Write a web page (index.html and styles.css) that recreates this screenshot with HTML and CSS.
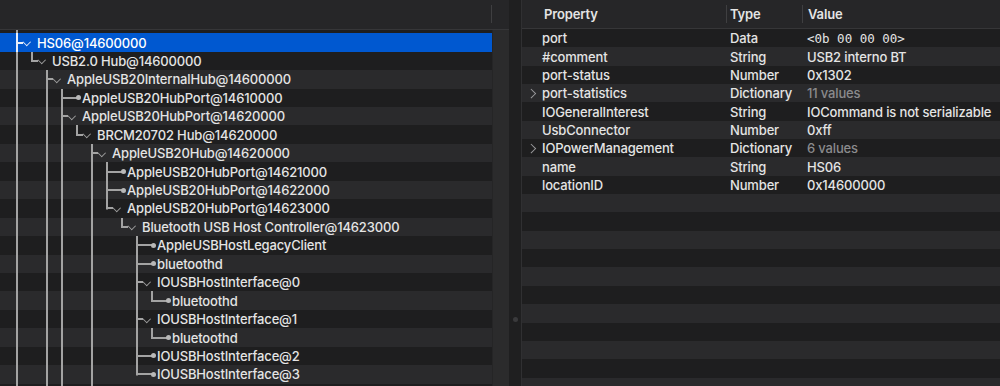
FILE: index.html
```html
<!DOCTYPE html>
<html lang="en">
<head>
    <meta charset="UTF-8">
    <title>IORegistryExplorer</title>
    <link rel="stylesheet" href="styles.css">
</head>
<body>
    <div class="window">
        <section class="tree-pane">
            <div class="tree-head"><span class="head-sep"></span></div>
            <div class="tree-body">
                <div class="tree-rows">
                    <div class="row partial"><i class="g v"></i></div>
                    <div class="row selected"><i class="c chev"></i><span>HS06@14600000</span></div>
                    <div class="row"><i class="g v"></i><i class="c end chev"></i><span>USB2.0 Hub@14600000</span></div>
                    <div class="row"><i class="g v"></i><i class="g"></i><i class="c chev"></i><span>AppleUSB20InternalHub@14600000</span></div>
                    <div class="row"><i class="g v"></i><i class="g"></i><i class="g v"></i><i class="c dot"></i><span>AppleUSB20HubPort@14610000</span></div>
                    <div class="row"><i class="g v"></i><i class="g"></i><i class="g v"></i><i class="c chev"></i><span>AppleUSB20HubPort@14620000</span></div>
                    <div class="row"><i class="g v"></i><i class="g"></i><i class="g v"></i><i class="g v"></i><i class="c end chev"></i><span>BRCM20702 Hub@14620000</span></div>
                    <div class="row"><i class="g v"></i><i class="g"></i><i class="g v"></i><i class="g v"></i><i class="g"></i><i class="c chev"></i><span>AppleUSB20Hub@14620000</span></div>
                    <div class="row"><i class="g v"></i><i class="g"></i><i class="g v"></i><i class="g v"></i><i class="g"></i><i class="g v"></i><i class="c dot"></i><span>AppleUSB20HubPort@14621000</span></div>
                    <div class="row"><i class="g v"></i><i class="g"></i><i class="g v"></i><i class="g v"></i><i class="g"></i><i class="g v"></i><i class="c dot"></i><span>AppleUSB20HubPort@14622000</span></div>
                    <div class="row"><i class="g v"></i><i class="g"></i><i class="g v"></i><i class="g v"></i><i class="g"></i><i class="g v"></i><i class="c end chev"></i><span>AppleUSB20HubPort@14623000</span></div>
                    <div class="row"><i class="g v"></i><i class="g"></i><i class="g v"></i><i class="g v"></i><i class="g"></i><i class="g v"></i><i class="g"></i><i class="c end chev"></i><span>Bluetooth USB Host Controller@14623000</span></div>
                    <div class="row"><i class="g v"></i><i class="g"></i><i class="g v"></i><i class="g v"></i><i class="g"></i><i class="g v"></i><i class="g"></i><i class="g"></i><i class="c dot"></i><span>AppleUSBHostLegacyClient</span></div>
                    <div class="row"><i class="g v"></i><i class="g"></i><i class="g v"></i><i class="g v"></i><i class="g"></i><i class="g v"></i><i class="g"></i><i class="g"></i><i class="c dot"></i><span>bluetoothd</span></div>
                    <div class="row"><i class="g v"></i><i class="g"></i><i class="g v"></i><i class="g v"></i><i class="g"></i><i class="g v"></i><i class="g"></i><i class="g"></i><i class="c chev"></i><span>IOUSBHostInterface@0</span></div>
                    <div class="row"><i class="g v"></i><i class="g"></i><i class="g v"></i><i class="g v"></i><i class="g"></i><i class="g v"></i><i class="g"></i><i class="g"></i><i class="g v"></i><i class="c end dot"></i><span>bluetoothd</span></div>
                    <div class="row"><i class="g v"></i><i class="g"></i><i class="g v"></i><i class="g v"></i><i class="g"></i><i class="g v"></i><i class="g"></i><i class="g"></i><i class="c chev"></i><span>IOUSBHostInterface@1</span></div>
                    <div class="row"><i class="g v"></i><i class="g"></i><i class="g v"></i><i class="g v"></i><i class="g"></i><i class="g v"></i><i class="g"></i><i class="g"></i><i class="g v"></i><i class="c end dot"></i><span>bluetoothd</span></div>
                    <div class="row"><i class="g v"></i><i class="g"></i><i class="g v"></i><i class="g v"></i><i class="g"></i><i class="g v"></i><i class="g"></i><i class="g"></i><i class="c dot"></i><span>IOUSBHostInterface@2</span></div>
                    <div class="row"><i class="g v"></i><i class="g"></i><i class="g v"></i><i class="g v"></i><i class="g"></i><i class="g v"></i><i class="g"></i><i class="g"></i><i class="c end dot"></i><span>IOUSBHostInterface@3</span></div>
                    <div class="row"><i class="g v"></i><i class="g"></i><i class="g v"></i><i class="g v"></i><i class="g"></i><i class="g v"></i></div>
                </div>
                <div class="scroll-track"></div>
            </div>
        </section>

        <div class="splitter"><span class="grip"></span></div>

        <section class="props-pane">
            <div class="props-head">
                <span class="h-prop">Property</span>
                <span class="h-type">Type</span>
                <span class="h-value">Value</span>
            </div>
            <div class="props-rows">
                <div class="prow"><span class="p">port</span><span class="t">Data</span><span class="v mono">&lt;0b 00 00 00&gt;</span></div>
                <div class="prow"><span class="p">#comment</span><span class="t">String</span><span class="v">USB2 interno BT</span></div>
                <div class="prow"><span class="p">port-status</span><span class="t">Number</span><span class="v">0x1302</span></div>
                <div class="prow"><span class="p more">port-statistics</span><span class="t">Dictionary</span><span class="v dim">11 values</span></div>
                <div class="prow"><span class="p">IOGeneralInterest</span><span class="t">String</span><span class="v">IOCommand is not serializable</span></div>
                <div class="prow"><span class="p">UsbConnector</span><span class="t">Number</span><span class="v">0xff</span></div>
                <div class="prow"><span class="p more">IOPowerManagement</span><span class="t">Dictionary</span><span class="v dim">6 values</span></div>
                <div class="prow"><span class="p">name</span><span class="t">String</span><span class="v">HS06</span></div>
                <div class="prow"><span class="p">locationID</span><span class="t">Number</span><span class="v">0x14600000</span></div>
                <div class="prow"></div>
                <div class="prow"></div>
                <div class="prow"></div>
                <div class="prow"></div>
                <div class="prow"></div>
                <div class="prow"></div>
                <div class="prow"></div>
                <div class="prow"></div>
                <div class="prow"></div>
                <div class="prow"></div>
                <div class="prow"></div>
            </div>
        </section>
    </div>
</body>
</html>
```

FILE: styles.css
```css
:root {
    --row-dark: #1e1e1f;
    --row-light: #2a2a2c;
    --head: #262628;
    --head-line: #363638;
    --text: #e4e4e4;
    --text-dim: #8b8b8d;
    --line: #a3a3a3;
    --select: #0058d0;
    --font: Inter, "Noto Sans", sans-serif;
    --mono: "DejaVu Sans Mono", "Liberation Mono", monospace;
}

* {
    margin: 0;
    padding: 0;
    box-sizing: border-box;
}

body {
    background: var(--row-dark);
    font-family: var(--font);
    font-size: 13px;
    font-weight: 500;
    letter-spacing: -0.15px;
    color: var(--text);
    overflow: hidden;
}

.window {
    display: flex;
    width: 1000px;
    height: 386px;
    overflow: hidden;
}

/* left pane: registry tree */

.tree-pane {
    width: 509px;
    flex: none;
    display: flex;
    flex-direction: column;
}

.tree-head {
    height: 30px;
    flex: none;
    background: var(--head);
    border-bottom: 1px solid var(--head-line);
    position: relative;
}

.head-sep {
    position: absolute;
    left: 491px;
    top: 5px;
    width: 1px;
    height: 18px;
    background: #3f3f41;
}

.tree-body {
    display: flex;
    flex: 1;
    overflow: hidden;
}

.tree-rows {
    width: 492px;
    flex: none;
}

.scroll-track {
    flex: 1;
    background: #2b2b2c;
    border-left: 1px solid #252526;
}

.row {
    display: flex;
    align-items: center;
    height: 18.45px;
    padding-left: 10px;
    white-space: nowrap;
    --c: var(--line);
}

.row:nth-child(odd) {
    background: var(--row-dark);
}

.row:nth-child(even) {
    background: var(--row-light);
}

.row.partial {
    height: 3.3px;
}

.row.selected {
    background: var(--select);
    color: #fff;
    --c: #e8eefa;
}

.g {
    width: 15px;
    align-self: stretch;
    flex: none;
}

.g.v {
    background: linear-gradient(var(--c), var(--c)) 6px 0 / 2px 100% no-repeat;
}

.c {
    width: 27px;
    align-self: stretch;
    flex: none;
    position: relative;
    background:
        linear-gradient(var(--c), var(--c)) 6px 0 / 2px 100% no-repeat,
        linear-gradient(var(--c), var(--c)) 6px 50% / 7px 2px no-repeat;
}

.c.end {
    background:
        linear-gradient(var(--c), var(--c)) 6px 0 / 2px calc(50% + 1px) no-repeat,
        linear-gradient(var(--c), var(--c)) 6px 50% / 7px 2px no-repeat;
}

.c.dot {
    background:
        linear-gradient(var(--c), var(--c)) 6px 0 / 2px 100% no-repeat,
        linear-gradient(var(--c), var(--c)) 6px 50% / 16px 2px no-repeat;
}

.c.end.dot {
    background:
        linear-gradient(var(--c), var(--c)) 6px 0 / 2px calc(50% + 1px) no-repeat,
        linear-gradient(var(--c), var(--c)) 6px 50% / 16px 2px no-repeat;
}

.c.dot::after {
    content: '';
    position: absolute;
    left: 20.5px;
    top: 50%;
    width: 5px;
    height: 5px;
    margin-top: -2.5px;
    border-radius: 50%;
    background: #b8b8b8;
}

.c.chev::after {
    content: '';
    position: absolute;
    left: 13.5px;
    top: 50%;
    width: 4.5px;
    height: 4.5px;
    margin-top: -3.5px;
    border-right: 1.5px solid var(--c);
    border-bottom: 1.5px solid var(--c);
    transform: rotate(45deg);
}

/* splitter */

.splitter {
    width: 13px;
    flex: none;
    background: #1f1f20;
    border-right: 1px solid #303032;
    position: relative;
}

.grip {
    position: absolute;
    left: 4px;
    top: 317px;
    width: 5px;
    height: 5px;
    border-radius: 50%;
    background: #3a3a3c;
}

/* right pane: properties */

.props-pane {
    flex: 1;
    display: flex;
    flex-direction: column;
    overflow: hidden;
}

.props-head {
    display: grid;
    grid-template-columns: 204px 76px 1fr;
    height: 29px;
    flex: none;
    align-items: center;
    background: var(--head);
    border-bottom: 1px solid var(--head-line);
    font-weight: 600;
}

.props-head span {
    position: relative;
    line-height: 18px;
}

.h-prop {
    padding-left: 22px;
}

.h-type {
    padding-left: 4px;
}

.h-value {
    padding-left: 6px;
}

.h-type::before,
.h-value::before {
    content: '';
    position: absolute;
    left: 0;
    top: 0;
    width: 1px;
    height: 18px;
    background: #3f3f41;
}

.props-rows {
    flex: none;
}

.prow {
    display: grid;
    grid-template-columns: 204px 76px 1fr;
    align-items: center;
    height: 18.35px;
    white-space: nowrap;
}

.prow:nth-child(odd) {
    background: var(--row-dark);
}

.prow:nth-child(even) {
    background: var(--row-light);
}

.p {
    padding-left: 20px;
    position: relative;
}

.p.more::before {
    content: '';
    position: absolute;
    left: 6px;
    top: 50%;
    width: 5.5px;
    height: 5.5px;
    margin-top: -3.5px;
    border-top: 1.5px solid #9a9a9c;
    border-right: 1.5px solid #9a9a9c;
    transform: rotate(45deg);
}

.t {
    padding-left: 4px;
}

.v {
    padding-left: 5px;
}

.dim {
    color: var(--text-dim);
}

.mono {
    font-family: var(--mono);
    font-size: 12.5px;
    font-weight: 400;
    letter-spacing: 0;
}
```
